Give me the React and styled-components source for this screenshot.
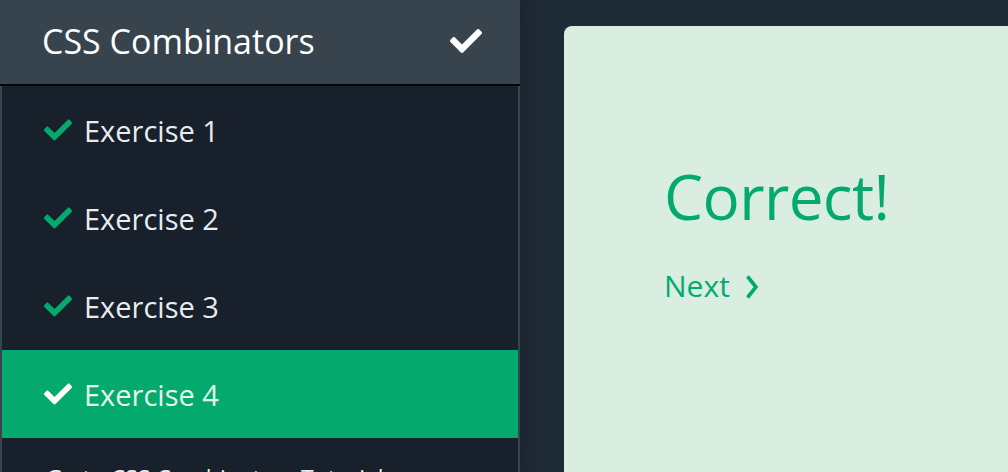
import React from 'react';
import styled, { createGlobalStyle } from 'styled-components';
import { FaCheck } from 'react-icons/fa';

const GlobalStyle = createGlobalStyle`
  html, body {
    margin: 0;
    padding: 0;
    background-color: #1f2a37;
    font-family: 'Open Sans', 'Noto Sans', sans-serif;
    overflow: hidden;
  }
`;

const Page = styled.div`
  display: flex;
  width: 1008px;
  height: 472px;
  overflow: hidden;
  background-color: #1f2a37;
`;

const Sidebar = styled.nav`
  flex: 0 0 516px;
  height: 100%;
  background-color: #17202b;
  border-left: 2px solid #38444d;
  border-right: 2px solid #38444d;
  box-shadow: 4px 0 20px rgba(0, 0, 0, 0.2);
  display: flex;
  flex-direction: column;
  position: relative;
  z-index: 1;
`;

const Header = styled.div`
  flex-shrink: 0;
  height: 84px;
  margin: 0 -2px;
  padding: 0 38px 2px 42px;
  box-sizing: border-box;
  height: 84px;
  background-color: #38444d;
  border-bottom: 2px solid #000;
  box-sizing: content-box;
  height: 82px;
  display: flex;
  align-items: center;
  justify-content: space-between;
  color: #fff;
  font-size: 34px;
  .check {
    font-size: 32px;
  }
`;

const Item = styled.div`
  flex-shrink: 0;
  height: 88px;
  display: flex;
  align-items: center;
  gap: 12px;
  padding-left: 42px;
  font-size: 29px;
  color: ${(p) => (p.active ? '#e6f4ec' : '#e9ecef')};
  background-color: ${(p) => (p.active ? '#04aa6d' : 'transparent')};
  svg {
    font-size: 28px;
    color: ${(p) => (p.active ? '#fff' : '#04aa6d')};
  }
`;

const TutorialLink = styled.div`
  flex-shrink: 0;
  padding: 26px 0 0 44px;
  font-size: 23px;
  line-height: 1.3;
  color: #e9ecef;
  white-space: nowrap;
`;

const Main = styled.main`
  flex: 1;
  padding: 26px 0 0 44px;
`;

const Card = styled.div`
  width: 520px;
  height: 480px;
  background-color: #d9eee1;
  border-radius: 8px 0 0 0;
  padding: 139px 0 0 100px;
  box-sizing: border-box;
  color: #04aa6d;
`;

const Title = styled.h1`
  margin: 0;
  font-weight: 400;
  font-size: 62px;
  line-height: 1;
  letter-spacing: -0.6px;
`;

const NextLink = styled.a`
  display: inline-flex;
  align-items: center;
  gap: 15px;
  margin-top: 38px;
  font-size: 30px;
  color: #04aa6d;
  text-decoration: none;
  svg {
    margin-top: 2px;
  }
`;

const Chevron = () => (
  <svg width='14' height='24' viewBox='0 0 14 24'>
    <path d='M2.5 1.5 L11 12 L2.5 22.5' fill='none' stroke='currentColor' strokeWidth='3.6' />
  </svg>
);

const exercises = ['Exercise 1', 'Exercise 2', 'Exercise 3', 'Exercise 4'];

export default function App() {
  return (
    <>
      <GlobalStyle />
      <Page>
        <Sidebar>
          <Header>
            <span>CSS Combinators</span>
            <FaCheck className='check' />
          </Header>
          {exercises.map((name, i) => (
            <Item key={name} active={i === 3}>
              <FaCheck />
              <span>{name}</span>
            </Item>
          ))}
          <TutorialLink>Go to CSS Combinators Tutorial</TutorialLink>
        </Sidebar>
        <Main>
          <Card>
            <Title>Correct!</Title>
            <NextLink>
              Next <Chevron />
            </NextLink>
          </Card>
        </Main>
      </Page>
    </>
  );
}
